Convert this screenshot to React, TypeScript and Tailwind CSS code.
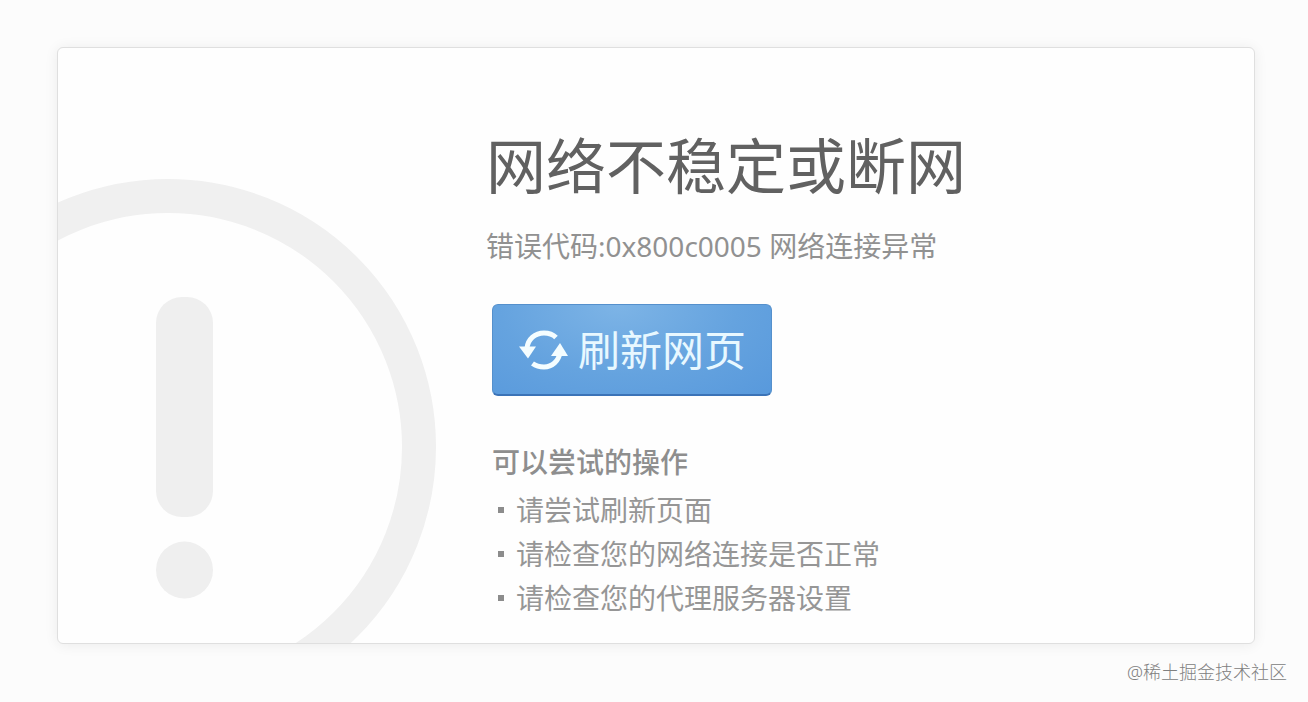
const tips = ['请尝试刷新页面', '请检查您的网络连接是否正常', '请检查您的代理服务器设置'];

function WarningMark() {
  return (
    <svg className="h-[595px] w-[428px] shrink-0 self-end" viewBox="0 0 428 595" fill="none" aria-hidden="true">
      <circle cx="110" cy="399" r="251" stroke="#f0f0f0" strokeWidth="34" />
      <rect x="98" y="249" width="57" height="220" rx="26" fill="#efefef" />
      <circle cx="126.500" cy="522" r="28.500" fill="#efefef" />
    </svg>
  );
}

function RefreshIcon() {
  return (
    <svg className="h-10 w-[50px] shrink-0" viewBox="0 0 50 40" fill="none" aria-hidden="true">
      <path d="M9 18C10 9 17 3 26 3C31 3 35 4.500 38 7.500" stroke="#f4fdff" strokeWidth="5" />
      <path d="M42 22C41 31 34 37 26 37C21.500 37 18 36 14.500 33.500" stroke="#f4fdff" strokeWidth="5" />
      <path d="M1 16.500H18L10 28.500Z" fill="#f4fdff" />
      <path d="M33 26L42 13L50 26Z" fill="#f4fdff" />
    </svg>
  );
}

export default function App() {
  return (
    <div className="flex min-h-screen flex-col bg-[#fcfcfc] pt-[47px] pr-[53px] pl-[57px] font-['Noto_Sans','Noto_Sans_CJK_SC',sans-serif]">
      <main className="flex overflow-hidden rounded-md border border-[#dfdfdf] bg-[#fefefe] shadow-[0_1px_14px_rgba(0,0,0,0.07)]">
        <WarningMark />
        <div className="min-w-0 flex-1 pt-20">
          <h1 className="text-[60px] leading-[76px] font-normal text-[#616161]">网络不稳定或断网</h1>
          <p className="mt-5 text-[28px] leading-[44px] text-[#919191]">错误代码:0x800c0005 网络连接异常</p>
          <button
            type="button"
            className="mt-9 ml-[6px] flex h-[92px] w-[280px] items-center justify-center gap-[10px] rounded-md border border-b-2 border-[#5590cc] border-b-[#3b73b7] bg-[radial-gradient(ellipse_at_45%_0%,#7db4e6_0%,#65a3df_55%,#5899dc_100%)] text-[42px] leading-none text-[#e8f8ff]"
          >
            <RefreshIcon />
            刷新网页
          </button>
          <section className="mt-11 ml-[6px] text-[28px] leading-[44px] text-[#969696]">
            <h2 className="font-medium text-[#8e8e8e]">可以尝试的操作</h2>
            <ul className="mt-1">
              {tips.map((tip) => (
                <li key={tip} className="flex items-center gap-3">
                  <span className="ml-[6px] size-[6px] bg-[#8c8c8c]" />
                  {tip}
                </li>
              ))}
            </ul>
          </section>
        </div>
      </main>
      <footer className="-mr-8 mt-3 self-end text-[18px] leading-8 font-light text-[#808080]">@稀土掘金技术社区</footer>
    </div>
  );
}
